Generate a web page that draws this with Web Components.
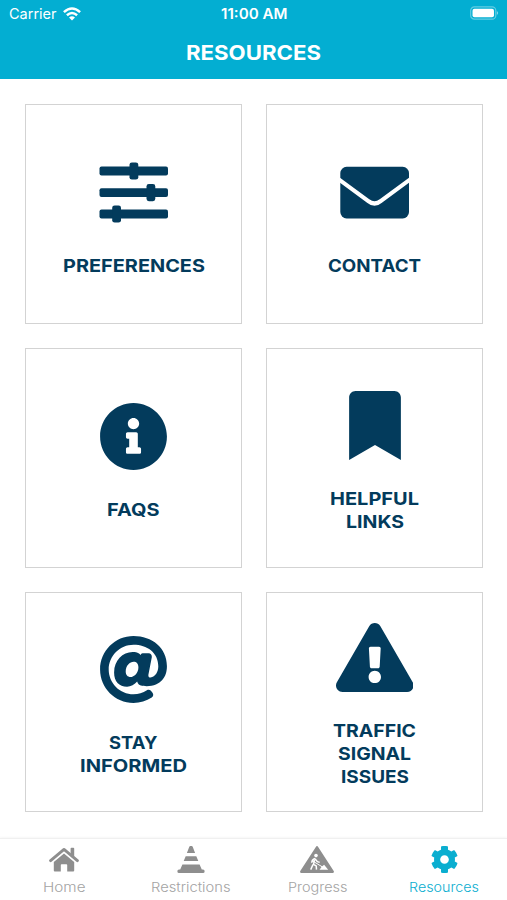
<!DOCTYPE html>
<html lang="en">
<head>
<meta charset="utf-8">
<title>Resources</title>
<style>
html, body { margin: 0; height: 100%; background: #fff; overflow: hidden; }
</style>
</head>
<body>
<resources-app></resources-app>
<script>
const define = (name, html, setup) => customElements.define(name, class extends HTMLElement {
  connectedCallback() {
    if (this.shadowRoot) return;
    const t = document.createElement('template');
    t.innerHTML = html;
    this.attachShadow({ mode: 'open' }).append(t.content.cloneNode(true));
    if (setup) setup(this, this.shadowRoot);
  }
});

const ICONS = {
  sliders: ['0 0 69 69', '<g fill="currentColor"><rect x="0.500" y="8.600" width="68.500" height="8.800" rx="2"/><rect x="0.500" y="30.200" width="68.500" height="8.800" rx="2"/><rect x="0.500" y="51.600" width="68.500" height="8.800" rx="2"/><rect x="30.500" y="4.400" width="8.800" height="17.200" rx="2.400"/><rect x="47.500" y="26" width="8.800" height="17.200" rx="2.400"/><rect x="13.200" y="47.400" width="8.800" height="17.200" rx="2.400"/></g>'],
  envelope: ['0 0 69 69', '<rect x=".3" y="8.800" width="68.700" height="51.600" rx="6.300" fill="currentColor"/><path d="M-2 20.800L28 42.800Q34.500 48.200 41 42.800L71 20.800" fill="none" stroke="#fff" stroke-width="4.200"/>'],
  info: ['0 0 512 512', '<path fill="currentColor" d="M256 8C119.043 8 8 119.083 8 256c0 136.997 111.043 248 248 248s248-111.003 248-248C504 119.083 392.957 8 256 8zm0 110c23.196 0 42 18.804 42 42s-18.804 42-42 42-42-18.804-42-42 18.804-42 42-42zm56 254c0 6.627-5.373 12-12 12h-88c-6.627 0-12-5.373-12-12v-24c0-6.627 5.373-12 12-12h12v-64h-12c-6.627 0-12-5.373-12-12v-24c0-6.627 5.373-12 12-12h64c6.627 0 12 5.373 12 12v100h12c6.627 0 12 5.373 12 12v24z"/>'],
  bookmark: ['0 0 384 512', '<path fill="currentColor" d="M0 512V48C0 21.490 21.490 0 48 0h288c26.510 0 48 21.490 48 48v464L192 400 0 512z"/>'],
  at: ['0 0 512 512', '<path fill="currentColor" d="M256 8C118.941 8 8 118.919 8 256c0 137.059 110.919 248 248 248 48.154 0 95.342-14.140 135.408-40.223 12.005-7.815 14.625-24.288 5.552-35.372l-10.177-12.433c-7.671-9.371-21.179-11.667-31.373-5.129C325.920 429.757 291.314 440 256 440c-101.458 0-184-82.542-184-184S154.542 72 256 72c100.139 0 184 57.619 184 160 0 38.786-21.093 79.742-58.170 83.693-17.349-.454-16.910-12.857-13.476-30.024l23.433-121.110C394.653 149.750 383.308 136 368.225 136h-44.981a13.518 13.518 0 0 0-13.432 11.993l-.010.092c-14.697-17.901-40.448-21.775-59.971-21.775-74.580 0-137.831 62.234-137.831 151.460 0 65.303 36.785 105.870 96 105.870 26.984 0 57.369-15.637 74.991-38.333 9.522 34.104 40.613 34.103 70.710 34.103C462.609 379.410 504 307.798 504 232 504 95.653 394.023 8 256 8zm-21.680 304.430c-22.249 0-36.070-15.623-36.070-40.771 0-44.993 30.779-72.729 58.630-72.729 22.292 0 35.601 15.241 35.601 40.770 0 45.061-33.875 72.730-58.161 72.730z"/>'],
  warning: ['0 0 576 512', '<path fill="currentColor" d="M569.517 440.013C587.975 472.007 564.806 512 527.940 512H48.054c-36.937 0-59.999-40.055-41.577-71.987L246.423 23.985c18.467-32.009 64.720-31.951 83.154 0l239.940 416.028zM288 354c-25.405 0-46 20.595-46 46s20.595 46 46 46 46-20.595 46-46-20.595-46-46-46zm-43.673-165.346l7.418 136c.347 6.364 5.609 11.346 11.982 11.346h48.546c6.373 0 11.635-4.982 11.982-11.346l7.418-136c.375-6.874-5.098-12.654-11.982-12.654h-63.383c-6.884 0-12.356 5.780-11.981 12.654z"/>'],
  home: ['0 0 30 27', '<path d="M1.600 14.600L15 3.400l13.400 11.200" fill="none" stroke="currentColor" stroke-width="2.900" stroke-linecap="round" stroke-linejoin="round"/><path fill="currentColor" d="M21.600 2.600q0-.8.8-.8h2q.8 0 .8.8v8.200l-3.600-3zM15 7.600l10.200 8.500v8.400q0 1-1 1h-6v-6.400q0-.8-.8-.8h-4.800q-.8 0-.8.8v6.400h-6q-1 0-1-1v-8.400z"/>'],
  cone: ['0 0 28 27', '<path fill="currentColor" d="M12.200.9Q12.500 0 13.400 0h1.200q.9 0 1.200.9l2.300 6H9.900zM8.700 10.300h10.600l2 4.800H6.700zM5.400 18.400h17.200l2.200 5.100H26q1.600 0 1.600 1.500v.5q0 1.500-1.600 1.500H2Q.4 27 .4 25.500V25q0-1.500 1.600-1.500h1.200z"/>'],
  worker: ['0 0 34 27', '<path fill="currentColor" stroke="currentColor" stroke-width="2.400" stroke-linejoin="round" d="M17 1.300L32.700 25.700H1.300z"/><circle cx="16" cy="9.600" r="1.800" fill="#fff"/><path d="M15 12.500q-3 1-3.300 4.200M15 12.700l2.300 2.900 2.400.8M14.500 14l-1 4.300 2.700 1.600.3 3.700M13 18.500l-2.300 5.100" fill="none" stroke="#fff" stroke-width="1.500" stroke-linejoin="round"/><path d="M11.800 14.500L23 21.300" stroke="#fff" stroke-width="1"/><path fill="#fff" d="M19.500 23.700l2.200-3 2.400-1.900 4.100 4.900z"/>'],
  cog: ['10 8 492 496', '<path fill="currentColor" d="M487.4 315.7l-42.6-24.6c4.3-23.2 4.3-47 0-70.2l42.6-24.6c4.9-2.8 7.1-8.6 5.5-14-11.1-35.6-30-67.8-54.7-94.6-3.8-4.1-10-5.1-14.8-2.3L380.8 110c-17.9-15.4-38.5-27.3-60.8-35.1V25.8c0-5.6-3.9-10.5-9.4-11.7-36.700-8.200-74.300-7.800-109.200 0-5.500 1.200-9.400 6.100-9.400 11.700V75c-22.200 7.900-42.800 19.800-60.800 35.100L88.700 85.500c-4.900-2.800-11-1.900-14.800 2.300-24.700 26.700-43.600 58.900-54.700 94.600-1.700 5.400.6 11.200 5.500 14L67.300 221c-4.300 23.200-4.300 47 0 70.200l-42.600 24.600c-4.900 2.800-7.100 8.600-5.500 14 11.100 35.600 30 67.800 54.700 94.600 3.800 4.100 10 5.100 14.800 2.300l42.600-24.600c17.900 15.400 38.500 27.300 60.800 35.100v49.200c0 5.600 3.900 10.500 9.400 11.700 36.700 8.200 74.300 7.800 109.200 0 5.500-1.200 9.400-6.100 9.400-11.700v-49.200c22.200-7.900 42.800-19.800 60.800-35.100l42.600 24.600c4.900 2.800 11 1.900 14.800-2.300 24.700-26.700 43.600-58.900 54.700-94.600 1.500-5.500-.7-11.300-5.600-14.100zM256 336c-44.100 0-80-35.900-80-80s35.900-80 80-80 80 35.900 80 80-35.900 80-80 80z"/>'],
  wifi: ['0 0 18 14', '<g fill="none" stroke="#fff" stroke-width="2.500"><path d="M.9 5.100Q9-2.200 17.100 5.100"/><path d="M3.900 8.300q5.100-4.500 10.200 0"/></g><path fill="#fff" d="M6 10.500q3-2.500 6 0L9 13.600z"/>'],
  battery: ['0 0 30 14', '<rect x=".7" y=".7" width="26" height="12.600" rx="3.800" fill="none" stroke="#fff" stroke-opacity=".38" stroke-width="1.200"/><rect x="2.600" y="2.600" width="22.200" height="8.800" rx="2" fill="#fff"/><path d="M27.800 4.900q2.600 2.100 0 4.200z" fill="#fff" opacity=".5"/>']
};

/* Inline icon; width and height come from the w and h attributes. */
define('app-icon', '<style>:host{display:block;flex:none}svg{display:block}</style><div></div>', (el, root) => {
  const [box, body] = ICONS[el.getAttribute('name')];
  root.querySelector('div').innerHTML = `<svg viewBox="${box}" width="${el.getAttribute('w')}" height="${el.getAttribute('h')}">${body}</svg>`;
});

/* A single line of text widened to the advance width given in w. */
define('wide-text', `<style>
:host{display:block;white-space:nowrap;flex:none}
span{display:inline-block;transform-origin:0 50%}
</style><span><slot></slot></span>`, (el, root) => {
  const span = root.querySelector('span'), w = +el.getAttribute('w');
  el.style.width = w + 'px';
  span.style.transform = `scaleX(${w / span.getBoundingClientRect().width})`;
});

define('status-bar', `<style>
:host{display:grid;grid-template-columns:1fr auto 1fr;align-items:center;height:28px;padding:0 8px 0 9px;box-sizing:border-box;font-size:14.500px;line-height:28px}
.l{display:flex;align-items:center;gap:6px}
.l app-icon{padding-bottom:1px}
.r{justify-self:end;padding-bottom:2px}
.t{font-weight:600;font-size:14px}
</style>
<div class="l"><wide-text w="47.500">Carrier</wide-text><app-icon name="wifi" w="18" h="14"></app-icon></div>
<wide-text class="t" w="66.500">11:00 AM</wide-text>
<app-icon class="r" name="battery" w="29" h="14"></app-icon>`);

define('app-header', `<style>
:host{display:flex;flex-direction:column;height:79px;background:#03aed2;color:#fff;flex:none}
.title{display:flex;justify-content:center;height:50px;align-items:center;font-size:20.200px;font-weight:700;line-height:30px}
</style><status-bar></status-bar><div class="title"><wide-text w="135"><slot></slot></wide-text></div>`);

define('resource-card', `<style>
:host{display:flex;flex-direction:column;align-items:center;justify-content:center;gap:27px;box-sizing:border-box;border:1px solid #d3d3d3;padding-top:7.500px;color:#033b5c;background:#fff}
.label{display:flex;flex-direction:column;align-items:center;font-size:17.800px;font-weight:700;line-height:23.200px}
</style><div class="icon"></div><div class="label"><slot></slot></div>`, (el, root) => {
  root.querySelector('.icon').innerHTML = `<app-icon name="${el.getAttribute('icon')}" w="${el.getAttribute('iw') || 69}" h="69"></app-icon>`;
});

define('tab-item', `<style>
:host{display:flex;flex-direction:column;align-items:center;gap:4px;color:#8e8e8e;font-size:13.200px;line-height:20px;padding-left:1px}
.label{color:#a4a4a4;font-weight:350}
:host([active]),:host([active]) .label{color:#0aaed0}
.icon{height:27px}
</style><div class="icon"></div><div class="label"><slot></slot></div>`, (el, root) => {
  root.querySelector('.icon').innerHTML = `<app-icon name="${el.getAttribute('icon')}" w="${el.getAttribute('iw')}" h="27"></app-icon>`;
});

define('tab-bar', `<style>
:host{display:grid;grid-template-columns:repeat(4,1fr);height:62px;padding-top:7px;box-sizing:border-box;border-top:1px solid #f0f0f0;box-shadow:0 -1px 2px #f7f7f7;background:#fff;flex:none}
</style><slot></slot>`);

define('resources-app', `<style>
:host{display:flex;flex-direction:column;width:507px;height:900px;background:#fff;font-family:Inter,"Liberation Sans",sans-serif}
main{flex:1;box-sizing:border-box;padding:25px 24px 0 25px;display:grid;grid-template-columns:217px 217px;grid-template-rows:repeat(3,220px);gap:24px;min-height:0}
</style>
<app-header>RESOURCES</app-header>
<main>
<resource-card icon="sliders"><wide-text w="142">PREFERENCES</wide-text></resource-card>
<resource-card icon="envelope"><wide-text w="93">CONTACT</wide-text></resource-card>
<resource-card icon="info"><wide-text w="52.500">FAQS</wide-text></resource-card>
<resource-card icon="bookmark" iw="52"><wide-text w="89">HELPFUL</wide-text><wide-text w="58">LINKS</wide-text></resource-card>
<resource-card icon="at"><wide-text w="48.500">STAY</wide-text><wide-text w="107">INFORMED</wide-text></resource-card>
<resource-card icon="warning" iw="77.600"><wide-text w="83">TRAFFIC</wide-text><wide-text w="73">SIGNAL</wide-text><wide-text w="68">ISSUES</wide-text></resource-card>
</main>
<tab-bar>
<tab-item icon="home" iw="30"><wide-text w="42.500">Home</wide-text></tab-item>
<tab-item icon="cone" iw="28"><wide-text w="79.500">Restrictions</wide-text></tab-item>
<tab-item icon="worker" iw="34"><wide-text w="59.500">Progress</wide-text></tab-item>
<tab-item icon="cog" iw="27" active><wide-text w="70">Resources</wide-text></tab-item>
</tab-bar>`);
</script>
</body>
</html>
